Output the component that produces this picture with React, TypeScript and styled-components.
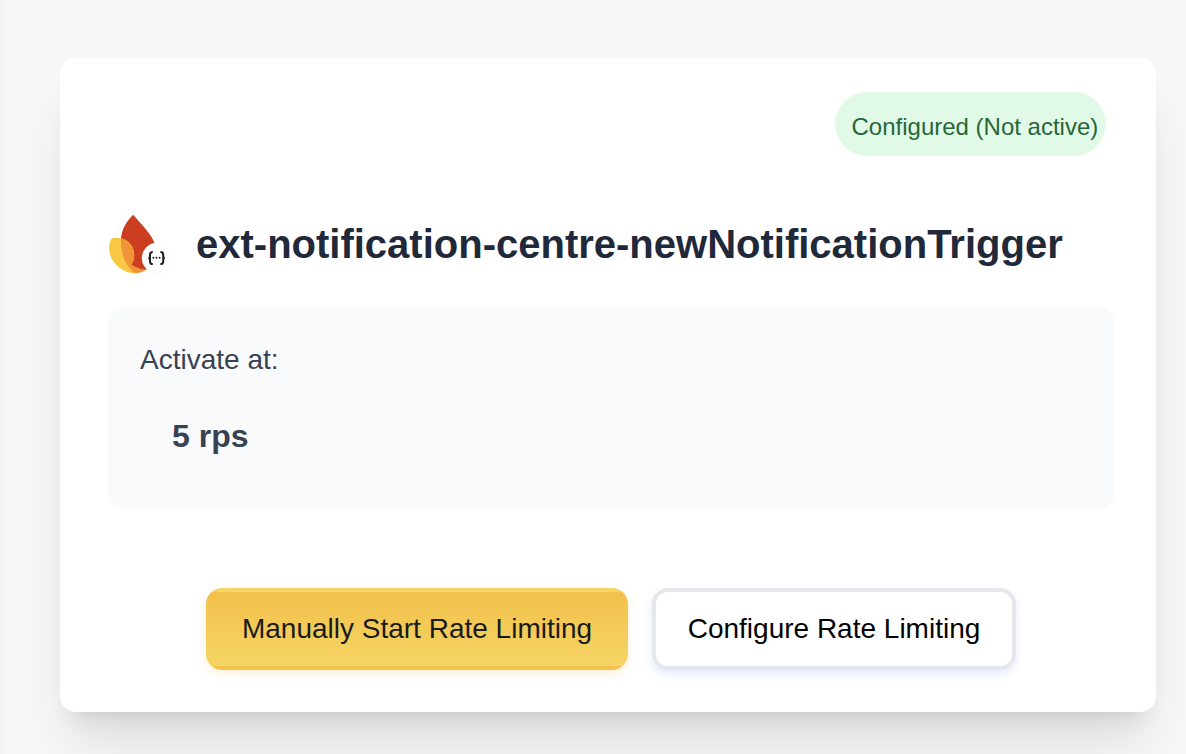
import styled, { createGlobalStyle } from "styled-components";

const GlobalStyle = createGlobalStyle`
  *, *::before, *::after {
    box-sizing: border-box;
  }

  body {
    margin: 0;
    font-family: "Liberation Sans", Arial, sans-serif;
    background-color: #f7f7f7;
    overflow: hidden;
  }
`;

const Page = styled.main`
  min-height: 754px;
  padding: 58px 30px 42px 60px;
  background: linear-gradient(to right, #f2f2f2 0, #f5f5f5 4px, #f7f7f7 12px);
`;

const Card = styled.section`
  height: 654px;
  padding: 34px 42px 42px 48px;
  display: flex;
  flex-direction: column;
  background-color: #ffffff;
  border-radius: 16px;
  box-shadow:
    0 40px 50px -10px rgba(0, 0, 0, 0.1),
    0 16px 20px -12px rgba(0, 0, 0, 0.1);
`;

const StatusBadge = styled.span`
  align-self: flex-end;
  height: 64px;
  width: 271px;
  margin-right: 8px;
  padding: 6px 0 0 16.5px;
  line-height: 58px;
  font-size: 24px;
  white-space: nowrap;
  color: #276738;
  background-color: #e1fae8;
  border-radius: 32px;
`;

const Header = styled.header`
  display: flex;
  align-items: center;
  gap: 24px;
  height: 64px;
  margin-top: 56px;

  svg {
    flex: none;
  }
`;

const Title = styled.h1`
  margin: 0;
  font-size: 40px;
  line-height: 56px;
  font-weight: 700;
  white-space: nowrap;
  color: #1f293a;
`;

const Details = styled.div`
  height: 200px;
  margin: 32px 0 0;
  padding: 32px;
  background-color: #f9fafc;
  border-radius: 12px;
`;

const DetailLabel = styled.p`
  margin: 0;
  font-size: 28px;
  line-height: 40px;
  color: #384252;
`;

const DetailValue = styled.p`
  margin: 32px 0 0 32px;
  font-size: 32px;
  line-height: 48px;
  font-weight: 700;
  color: #384252;
`;

const Actions = styled.div`
  display: flex;
  justify-content: center;
  gap: 24px;
  margin-top: 80px;
`;

const Button = styled.button<{ $primary?: boolean }>`
  width: ${({ $primary }) => ($primary ? 422 : 364)}px;
  height: 82px;
  padding: 0;
  border: 4px solid ${({ $primary }) => ($primary ? "transparent" : "#e5e7eb")};
  border-width: ${({ $primary }) => ($primary ? "4px 0" : "4px")};
  border-radius: 16px;
  font-family: inherit;
  font-size: 28px;
  white-space: nowrap;
  color: ${({ $primary }) => ($primary ? "#1a1a1a" : "#000000")};
  background: ${({ $primary }) =>
    $primary ? "linear-gradient(to bottom, #f2c04b, #f5d565)" : "#ffffff"};
  box-shadow: 0 4px 8px
    ${({ $primary }) =>
      $primary ? "rgba(242, 192, 75, 0.22)" : "rgba(80, 110, 240, 0.15)"};
  cursor: pointer;
`;

const ExtensionIcon = () => (
  <svg width="64" height="64" viewBox="0 0 64 64" aria-hidden="true">
    <defs>
      <clipPath id="flame">
        <path d="M25.2 2.8C17 11 13 19 13 29C13 42 17 53 27 61.5L40 62L50 42L46 30Z" />
      </clipPath>
    </defs>
    <path
      d="M25.2 2.8C17 11 13 19 13 29C13 44 20 55 32.5 59L38 57.5C48 53 50 42 46 30C43 22 33 12 25.2 2.8Z"
      fill="#cb3e20"
    />
    <path
      d="M3.5 26.5C14 23.5 26.2 30 26.2 43C26.2 47 25 50.5 23.3 52.6C27 55.8 32 57.2 37.5 58C31 61.8 24 62 18 59.5C3 53 -2.5 38 3.5 26.5Z"
      fill="#f8c845"
    />
    <path
      d="M3.5 26.5C14 23.5 26.2 30 26.2 43C26.2 47 25 50.5 23.3 52.6C27 55.8 32 57.2 37.5 58C31 61.8 24 62 18 59.5C3 53 -2.5 38 3.5 26.5Z"
      fill="#f09437"
      clipPath="url(#flame)"
    />
    <circle cx="49" cy="46" r="15" fill="#fff" stroke="#f5f5f5" strokeWidth="0.6" />
    <path
      d="M44.8 40C42.6 40 42 40.8 42 42.6V49.4C42 51.2 42.6 52 44.8 52M52.4 40C54.6 40 55.2 40.8 55.2 42.6V49.4C55.2 51.2 54.6 52 52.4 52M41.4 44.8V47.2M55.8 44.8V47.2"
      fill="none"
      stroke="#1e1e1e"
      strokeWidth="2"
    />
    <g fill="#1e1e1e">
      <circle cx="45.4" cy="45.7" r="1" />
      <circle cx="48.5" cy="45.7" r="1" />
      <circle cx="51.6" cy="45.7" r="1" />
    </g>
  </svg>
);

const App = () => {
  return (
    <>
      <GlobalStyle />
      <Page>
        <Card>
          <StatusBadge>Configured (Not active)</StatusBadge>
          <Header>
            <ExtensionIcon />
            <Title>ext-notification-centre-newNotificationTrigger</Title>
          </Header>
          <Details>
            <DetailLabel>Activate at:</DetailLabel>
            <DetailValue>5 rps</DetailValue>
          </Details>
          <Actions>
            <Button $primary>Manually Start Rate Limiting</Button>
            <Button>Configure Rate Limiting</Button>
          </Actions>
        </Card>
      </Page>
    </>
  );
};

export default App;
